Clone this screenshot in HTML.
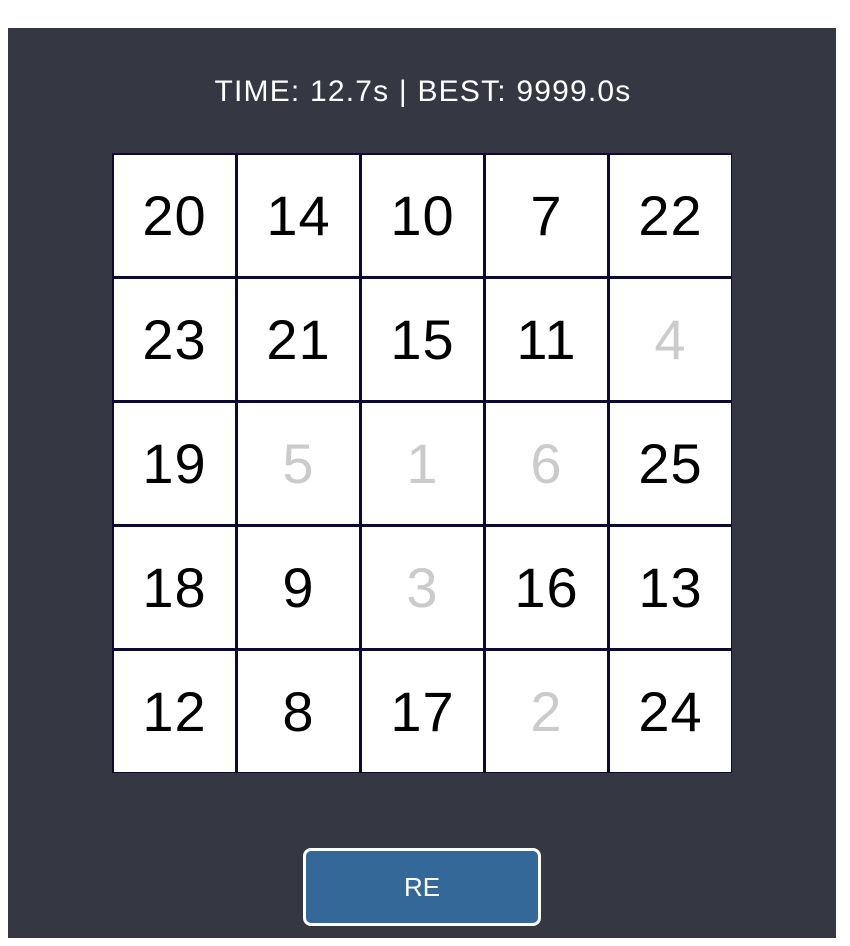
<!DOCTYPE html>
<html><head><meta charset="utf-8"><style>
html,body{margin:0;padding:0;background:#fff;width:850px;height:946px;overflow:hidden;font-family:"Liberation Sans",Helvetica,Arial,sans-serif}
#panel{position:absolute;left:8px;top:28px;width:828px;height:910px;background:#353743}
#hdr{position:absolute;left:0;width:846px;top:72px;text-align:center;color:#fff;font-size:30px;letter-spacing:1.2px;line-height:40px}
#grid{position:absolute;left:112px;top:153px;width:616px;height:616px;padding:2px;background:#0b0a36;display:grid;grid-template-columns:repeat(5,121px);grid-template-rows:repeat(5,121px);gap:3px}
.c{background:#fff;display:flex;align-items:center;justify-content:center;font-size:56px;letter-spacing:1px;color:#000}
.c.g{color:#cbcbcb}
#btn{position:absolute;left:303px;top:848px;width:232px;height:72px;border:3px solid #fff;border-radius:8px;background:#346899;color:#fff;font-size:26px;display:flex;align-items:center;justify-content:center}
</style></head><body>
<div id="panel"></div>
<div id="hdr">TIME: 12.7s | BEST: 9999.0s</div>
<div id="grid">
<div class="c">20</div><div class="c">14</div><div class="c">10</div><div class="c">7</div><div class="c">22</div>
<div class="c">23</div><div class="c">21</div><div class="c">15</div><div class="c">11</div><div class="c g">4</div>
<div class="c">19</div><div class="c g">5</div><div class="c g">1</div><div class="c g">6</div><div class="c">25</div>
<div class="c">18</div><div class="c">9</div><div class="c g">3</div><div class="c">16</div><div class="c">13</div>
<div class="c">12</div><div class="c">8</div><div class="c">17</div><div class="c g">2</div><div class="c">24</div>
</div>
<div id="btn">RE</div>
</body></html>
